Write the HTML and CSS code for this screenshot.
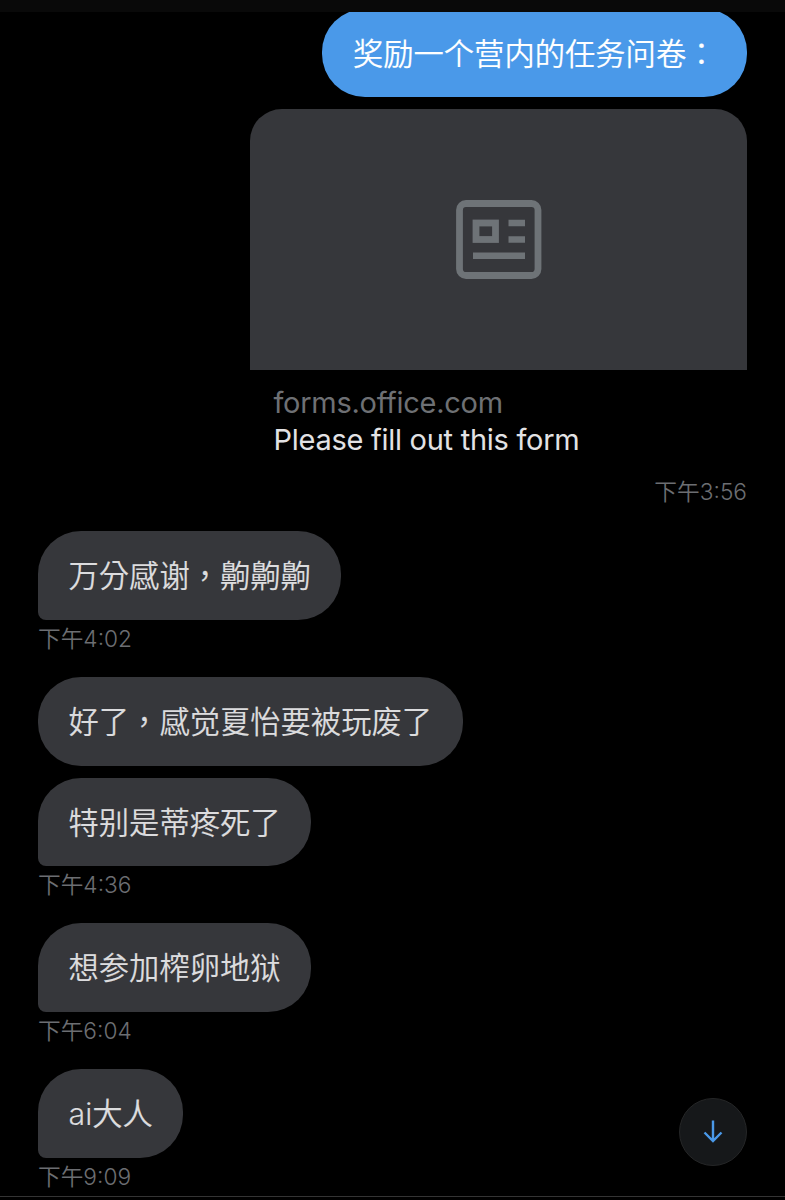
FILE: index.html
```
<!DOCTYPE html>
<html lang="zh-Hant">
<head>
    <meta charset="UTF-8">
    <meta name="viewport" content="width=device-width, initial-scale=1.0">
    <title>Messages</title>
    <link rel="stylesheet" href="styles.css">
</head>
<body>
    <div class="app">
        <div class="topbar"></div>

        <div class="conversation">
            <div class="group sent first">
                <div class="bubble">奖励一个营内的任务问卷：</div>
                <div class="card">
                    <div class="card-image">
                        <svg width="86" height="80" viewBox="0 0 86 80" fill="none" stroke="#6e7377">
                            <rect x="3.5" y="3.5" width="78.5" height="72" rx="6.5" stroke-width="6.8"/>
                            <rect x="20" y="23" width="19.5" height="16.5" stroke-width="6.8"/>
                            <path d="M52.5 23h16.5M52.5 39.5h16.5M17 55.8h52" stroke-width="6.6"/>
                        </svg>
                    </div>
                    <div class="card-text">
                        <div class="card-domain">forms.office.com</div>
                        <div class="card-title">Please fill out this form</div>
                    </div>
                </div>
                <div class="time">下午3:56</div>
            </div>

            <div class="group">
                <div class="bubble tail">万分感谢，齁齁齁</div>
                <div class="time">下午4:02</div>
            </div>

            <div class="group">
                <div class="bubble">好了，感觉夏怡要被玩废了</div>
                <div class="bubble tail">特别是蒂疼死了</div>
                <div class="time">下午4:36</div>
            </div>

            <div class="group">
                <div class="bubble tail">想参加榨卵地狱</div>
                <div class="time">下午6:04</div>
            </div>

            <div class="group">
                <div class="bubble tail">ai大人</div>
                <div class="time">下午9:09</div>
            </div>
        </div>

        <div class="composer"></div>

        <button class="scroll-down" aria-label="scroll down">
            <svg width="20" height="24" viewBox="0 0 20 24" fill="none" stroke="#4a99e9" stroke-width="2.4">
                <path d="M10 .5v20.5M1.5 12.5L10 21l8.5-8.5"/>
            </svg>
        </button>
    </div>
</body>
</html>
```

FILE: styles.css
```
* {
    box-sizing: border-box;
}
body {
    margin: 0;
    background-color: #000;
    color: #dcdcde;
    font-family: Inter, "Noto Sans CJK TC", sans-serif;
}
.app {
    position: relative;
    display: flex;
    flex-direction: column;
    height: 1200px;
    overflow: hidden;
}
.topbar {
    flex: none;
    height: 12px;
    background-color: #090909;
}
.conversation {
    flex: none;
    height: 1184px;
    padding: 0 38px;
    overflow: hidden;
}
.group {
    display: flex;
    flex-direction: column;
    align-items: flex-start;
    margin-bottom: 21.3px;
}
.sent {
    align-items: flex-end;
}
/* the first message is partly scrolled under the top bar */
.first {
    margin-top: -3.2px;
    margin-bottom: 22px;
}
.bubble {
    height: 88.5px;
    margin-bottom: 12px;
    padding: 0 30.5px;
    border-radius: 43px;
    background-color: #36373b;
    font-size: 30.3px;
    font-weight: 350;
    line-height: 91px;
    white-space: nowrap;
    -webkit-text-stroke: 0.15px;
}
.tail {
    margin-bottom: 0;
    border-bottom-left-radius: 8px;
}
.sent .bubble {
    background-color: #4a99e9;
    color: #fff;
}
.card {
    width: 497px;
    border-radius: 32px 32px 0 0;
    overflow: hidden;
}
.card-image {
    display: flex;
    align-items: center;
    justify-content: center;
    height: 260.5px;
    background-color: #36373b;
}
.card-text {
    height: 103.5px;
    padding: 14px 23.5px 0;
    font-size: 29px;
    letter-spacing: -0.27px;
    line-height: 37px;
    white-space: nowrap;
}
.card-domain {
    color: #6e7074;
}
.card-title {
    color: #e2e2e4;
}
.time {
    height: 36px;
    color: #6c6e72;
    font-size: 22.7px;
    font-weight: 350;
    line-height: 37px;
}
.composer {
    height: 4px;
    border-top: 1px solid #343434;
}
.scroll-down {
    position: absolute;
    right: 38px;
    bottom: 34px;
    display: flex;
    align-items: center;
    justify-content: center;
    width: 68px;
    height: 68px;
    padding: 0;
    border: 1px solid #252627;
    border-radius: 50%;
    background-color: #16181a;
}
```
